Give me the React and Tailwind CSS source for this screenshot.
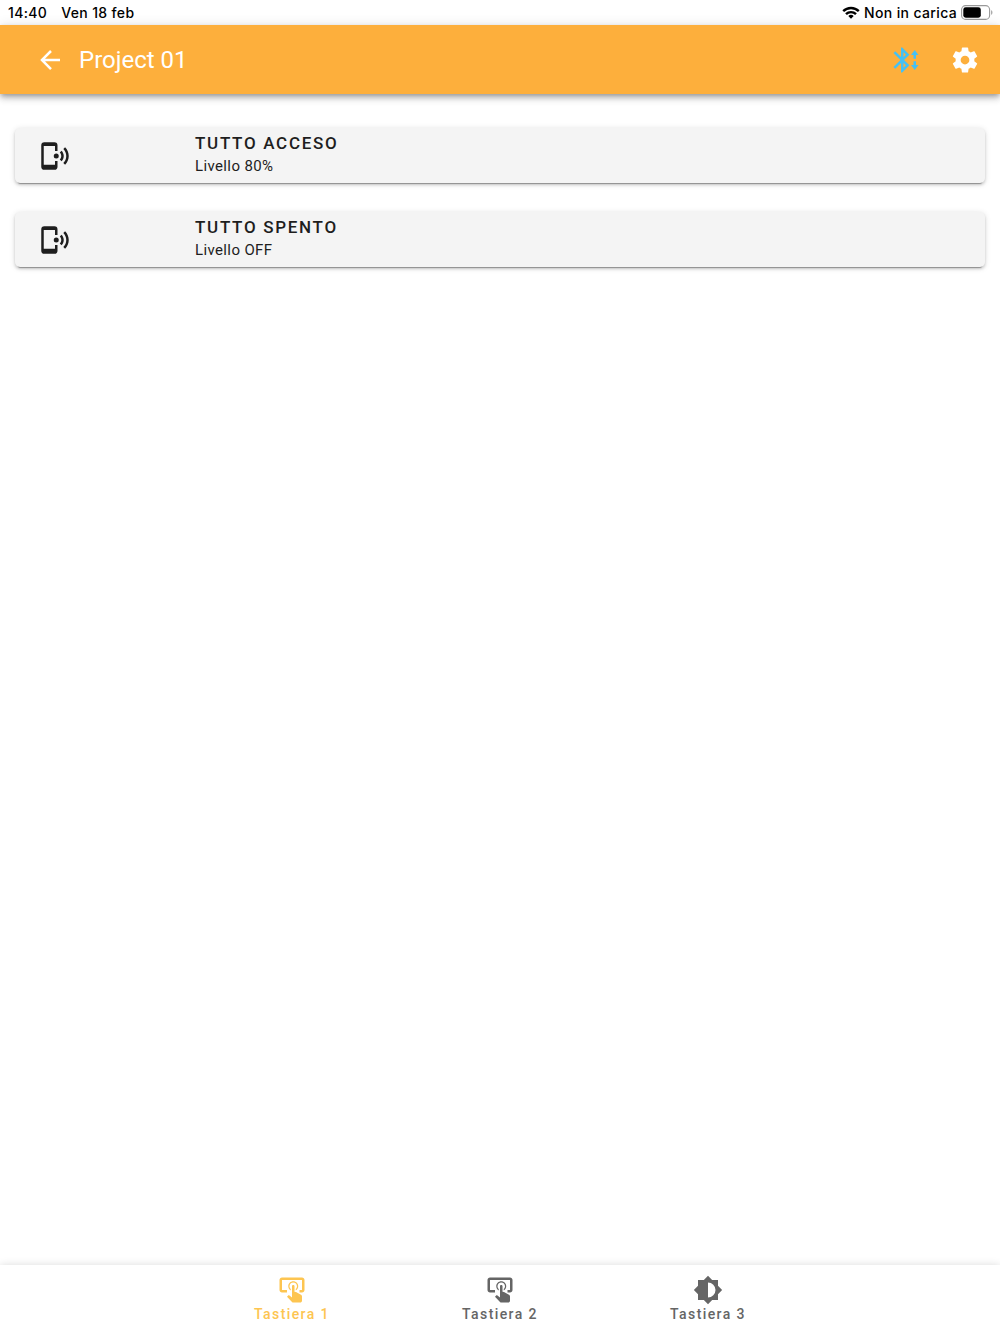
import React, { useState } from 'react';

const icons = {
  back: 'M20,11V13H8L13.5,18.5L12.08,19.92L4.16,12L12.08,4.08L13.5,5.5L8,11H20Z',
  cog: 'M12,15.5A3.5,3.5 0 0,1 8.5,12A3.5,3.5 0 0,1 12,8.5A3.5,3.5 0 0,1 15.5,12A3.5,3.5 0 0,1 12,15.5M19.43,12.97C19.47,12.65 19.5,12.33 19.5,12C19.5,11.67 19.47,11.34 19.43,11L21.54,9.37C21.73,9.22 21.78,8.95 21.66,8.73L19.66,5.27C19.54,5.05 19.27,4.96 19.05,5.05L16.56,6.05C16.04,5.66 15.5,5.32 14.87,5.07L14.5,2.42C14.46,2.18 14.25,2 14,2H10C9.75,2 9.54,2.18 9.5,2.42L9.13,5.07C8.5,5.32 7.96,5.66 7.44,6.05L4.95,5.05C4.73,4.96 4.46,5.05 4.34,5.27L2.34,8.73C2.21,8.95 2.27,9.22 2.46,9.37L4.57,11C4.53,11.34 4.5,11.67 4.5,12C4.5,12.33 4.53,12.65 4.57,12.97L2.46,14.63C2.27,14.78 2.21,15.05 2.34,15.27L4.34,18.73C4.46,18.95 4.73,19.03 4.95,18.95L7.44,17.94C7.96,18.34 8.5,18.68 9.13,18.93L9.5,21.58C9.54,21.82 9.75,22 10,22H14C14.25,22 14.46,21.82 14.5,21.58L14.87,18.93C15.5,18.67 16.04,18.34 16.56,17.94L19.05,18.95C19.27,19.03 19.54,18.95 19.66,18.73L21.66,15.27C21.78,15.05 21.73,14.78 21.54,14.63L19.43,12.97Z',
  bluetooth: 'M14.71,7.71L10.41,12L14.71,16.29L9,22H8V14.41L3.41,19L2,17.59L7.59,12L2,6.41L3.41,5L8,9.59V2H9L14.71,7.71M10,5.83V9.59L11.88,7.71L10,5.83M11.88,16.29L10,14.41V18.17L11.88,16.29M22,8H20V11H18V8H16L19,4L22,8M22,16L19,20L16,16H18V13H20V16H22Z',
  phone: 'M20.07,4.93C21.88,6.74 23,9.24 23,12C23,14.76 21.88,17.26 20.07,19.07L18.66,17.66C20.11,16.22 21,14.22 21,12C21,9.79 20.11,7.78 18.66,6.34L20.07,4.93M17.24,7.76C18.33,8.85 19,10.35 19,12C19,13.65 18.33,15.15 17.24,16.24L15.83,14.83C16.55,14.11 17,13.11 17,12C17,10.89 16.55,9.89 15.83,9.17L17.24,7.76M13,10A2,2 0 0,1 15,12A2,2 0 0,1 13,14A2,2 0 0,1 11,12A2,2 0 0,1 13,10M11.5,1A2.5,2.5 0 0,1 14,3.5V8H12V4H3V19H12V16H14V20.5A2.5,2.5 0 0,1 11.5,23H3.5A2.5,2.5 0 0,1 1,20.5V3.5A2.5,2.5 0 0,1 3.5,1H11.5Z',
  tap: 'M13 5C15.21 5 17 6.79 17 9C17 10.5 16.2 11.77 15 12.46V11.24C15.61 10.69 16 9.89 16 9C16 7.34 14.66 6 13 6S10 7.34 10 9C10 9.89 10.39 10.69 11 11.24V12.46C9.8 11.77 9 10.5 9 9C9 6.79 10.79 5 13 5M20 20.5C19.97 21.32 19.32 21.97 18.5 22H13C12.62 22 12.26 21.85 12 21.57L8 17.37L8.74 16.6C8.93 16.39 9.2 16.28 9.5 16.28H9.7L12 18V9C12 8.45 12.45 8 13 8S14 8.45 14 9V13.47L15.21 13.6L19.15 15.79C19.68 16.03 20 16.56 20 17.14V20.5M20 2H4C2.9 2 2 2.9 2 4V12C2 13.11 2.9 14 4 14H8V12L4 12L4 4H20L20 12H18V14H20V13.97L20.04 14C21.13 14 22 13.09 22 12V4C22 2.9 21.11 2 20 2Z',
  brightness: 'M12,18V6A6,6 0 0,1 18,12A6,6 0 0,1 12,18M20,15.31L23.31,12L20,8.69V4H15.31L12,0.69L8.69,4H4V8.69L0.69,12L4,15.31V20H8.69L12,23.31L15.31,20H20V15.31Z',
};

const scenes = [
  { title: 'TUTTO ACCESO', level: 'Livello 80%' },
  { title: 'TUTTO SPENTO', level: 'Livello OFF' },
];

const tabs = [
  { label: 'Tastiera 1', icon: 'tap' },
  { label: 'Tastiera 2', icon: 'tap' },
  { label: 'Tastiera 3', icon: 'brightness' },
];

const Icon = ({ name, className = 'size-[30px]' }) => (
  <svg viewBox="0 0 24 24" fill="currentColor" fillRule="evenodd" aria-hidden="true" className={className}>
    <path d={icons[name]} />
  </svg>
);

const StatusBar = () => (
  <div className="flex h-[25px] items-center justify-between pl-2 pr-1.5 font-['Inter',sans-serif] text-sm font-medium tracking-wide text-black">
    <div className="flex gap-3.5">
      <span>14:40</span>
      <span>Ven 18 feb</span>
    </div>
    <div className="flex items-center gap-1">
      <svg viewBox="0 0 18 13" className="h-[13px] w-[18px]" fill="none" stroke="black" strokeWidth="2.4">
        <path d="M1.2 5.2A11.2 11.2 0 0 1 16.8 5.2" />
        <path d="M4 8.2A7 7 0 0 1 14 8.2" />
        <path d="M9 12.8L6.3 10.1A3.9 3.9 0 0 1 11.7 10.1Z" fill="black" stroke="none" />
      </svg>
      <span>Non in carica</span>
      <svg viewBox="0 0 33 15" className="h-[15px] w-[33px]">
        <rect x="0.6" y="0.6" width="28" height="13.8" rx="4" fill="none" stroke="#999" strokeWidth="1.1" />
        <rect x="2.3" y="2.3" width="17.5" height="10.4" rx="2.4" fill="black" />
        <path d="M30.2 5.2C31.8 5.7 31.8 9.3 30.2 9.8Z" fill="#999" />
      </svg>
    </div>
  </div>
);

const App = () => {
  const [activeTab, setActiveTab] = useState(0);

  return (
    <div className="flex min-h-screen flex-col bg-white font-['Roboto',sans-serif] text-[#1e1e1e]">
      <StatusBar />
      <header className="flex h-[69px] items-center bg-[#fdaf3c] pl-[35px] pr-5 text-white shadow-[0_2px_5px_-1px_rgba(0,0,0,0.3),0_5px_6px_0_rgba(0,0,0,0.14),0_1px_12px_0_rgba(0,0,0,0.12)]">
        <button type="button" aria-label="Indietro">
          <Icon name="back" />
        </button>
        <h1 className="ml-3.5 flex-1 text-2xl">Project 01</h1>
        <div className="flex items-center gap-[29px]">
          <button type="button" aria-label="Bluetooth" className="text-[#45c1f5]">
            <Icon name="bluetooth" />
          </button>
          <button type="button" aria-label="Impostazioni">
            <Icon name="cog" />
          </button>
        </div>
      </header>

      <main className="flex flex-1 flex-col gap-[29px] px-[15px] pt-[34px]">
        {scenes.map((scene) => (
          <button
            key={scene.title}
            type="button"
            className="flex h-[55px] items-center rounded-[5px] bg-[#f4f4f4] pl-[25px] text-left shadow-[0_4px_1px_-3px_rgba(0,0,0,0.3),0_2px_3px_0_rgba(0,0,0,0.16),0_1px_6px_0_rgba(0,0,0,0.12)]"
          >
            <Icon name="phone" />
            <span className="ml-[125px] flex flex-col pb-1">
              <span className="text-[17px] leading-6 font-medium tracking-widest">{scene.title}</span>
              <span className="text-[15px] leading-[22px] tracking-wide">{scene.level}</span>
            </span>
          </button>
        ))}
      </main>

      <nav className="flex h-[69px] justify-center bg-white shadow-[0_0_8px_rgba(0,0,0,0.14)]">
        {tabs.map((tab, index) => (
          <button
            key={tab.label}
            type="button"
            onClick={() => setActiveTab(index)}
            className={`flex w-52 flex-col items-center pt-2.5 ${
              activeTab === index ? 'text-[#fdc551]' : 'text-[#656565]'
            }`}
          >
            <Icon name={tab.icon} />
            <span className="text-sm leading-[18px] font-medium tracking-widest">{tab.label}</span>
          </button>
        ))}
      </nav>
    </div>
  );
};

export default App;
